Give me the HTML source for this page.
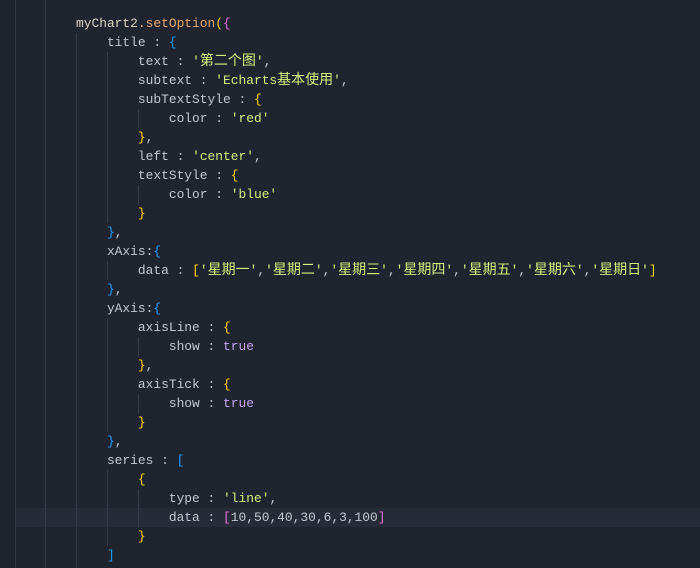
<!DOCTYPE html>
<html><head><meta charset="utf-8"><style>
html,body{margin:0;padding:0;}
body{width:700px;height:568px;background:#20242f;overflow:hidden;position:relative;font-family:"Liberation Mono","Noto Sans CJK SC",monospace;font-size:12.9px;color:#c3c7cf;}
.l{position:absolute;left:76px;height:19px;line-height:19px;white-space:pre;}
.g{position:absolute;width:1px;background:#353a46;}
.hl{position:absolute;left:15px;right:0;top:508px;height:19px;background:#272b37;}
.s{color:#d4ef7f}.y{color:#ffd700}.m{color:#da70d6}.b{color:#179fff}.t{color:#c5a3f5}.o{color:#e9a86f}.n{color:#dcd3c2}.p{color:#b8bcc4}
.c{font-size:14px;line-height:19px}
</style></head><body>
<div class="hl"></div>
<div class="g" style="left:15px;top:0;height:568px"></div>
<div class="g" style="left:45px;top:0;height:568px"></div>
<div class="g" style="left:76px;top:33px;height:535px"></div>
<div class="g" style="left:107px;top:52px;height:171px"></div>
<div class="g" style="left:107px;top:261px;height:19px"></div>
<div class="g" style="left:107px;top:318px;height:114px"></div>
<div class="g" style="left:107px;top:470px;height:76px"></div>
<div class="g" style="left:138px;top:109px;height:19px"></div>
<div class="g" style="left:138px;top:185px;height:19px"></div>
<div class="g" style="left:138px;top:337px;height:19px"></div>
<div class="g" style="left:138px;top:394px;height:19px"></div>
<div class="g" style="left:138px;top:489px;height:38px"></div>

<div class="l" style="top:13.5px"><span class="n">myChart2</span><span class="o">.setOption</span><span class="y">(</span><span class="m">{</span></div>
<div class="l" style="top:32.5px">    title <span class="p">:</span> <span class="b">{</span></div>
<div class="l" style="top:51.5px">        text <span class="p">:</span> <span class="s">'<span class="c">第二个图</span>'</span>,</div>
<div class="l" style="top:70.5px">        subtext <span class="p">:</span> <span class="s">'Echarts<span class="c">基本使用</span>'</span>,</div>
<div class="l" style="top:89.5px">        subTextStyle <span class="p">:</span> <span class="y">{</span></div>
<div class="l" style="top:108.5px">            color <span class="p">:</span> <span class="s">'red'</span></div>
<div class="l" style="top:127.5px">        <span class="y">}</span>,</div>
<div class="l" style="top:146.5px">        left <span class="p">:</span> <span class="s">'center'</span>,</div>
<div class="l" style="top:165.5px">        textStyle <span class="p">:</span> <span class="y">{</span></div>
<div class="l" style="top:184.5px">            color <span class="p">:</span> <span class="s">'blue'</span></div>
<div class="l" style="top:203.5px">        <span class="y">}</span></div>
<div class="l" style="top:222.5px">    <span class="b">}</span>,</div>
<div class="l" style="top:241.5px">    xAxis:<span class="b">{</span></div>
<div class="l" style="top:260.5px">        data <span class="p">:</span> <span class="y">[</span><span class="s">'<span class="c">星期一</span>'</span>,<span class="s">'<span class="c">星期二</span>'</span>,<span class="s">'<span class="c">星期三</span>'</span>,<span class="s">'<span class="c">星期四</span>'</span>,<span class="s">'<span class="c">星期五</span>'</span>,<span class="s">'<span class="c">星期六</span>'</span>,<span class="s">'<span class="c">星期日</span>'</span><span class="y">]</span></div>
<div class="l" style="top:279.5px">    <span class="b">}</span>,</div>
<div class="l" style="top:298.5px">    yAxis:<span class="b">{</span></div>
<div class="l" style="top:317.5px">        axisLine <span class="p">:</span> <span class="y">{</span></div>
<div class="l" style="top:336.5px">            show <span class="p">:</span> <span class="t">true</span></div>
<div class="l" style="top:355.5px">        <span class="y">}</span>,</div>
<div class="l" style="top:374.5px">        axisTick <span class="p">:</span> <span class="y">{</span></div>
<div class="l" style="top:393.5px">            show <span class="p">:</span> <span class="t">true</span></div>
<div class="l" style="top:412.5px">        <span class="y">}</span></div>
<div class="l" style="top:431.5px">    <span class="b">}</span>,</div>
<div class="l" style="top:450.5px">    series <span class="p">:</span> <span class="b">[</span></div>
<div class="l" style="top:469.5px">        <span class="y">{</span></div>
<div class="l" style="top:488.5px">            type <span class="p">:</span> <span class="s">'line'</span>,</div>
<div class="l" style="top:507.5px">            data <span class="p">:</span> <span class="m">[</span>10,50,40,30,6,3,100<span class="m">]</span></div>
<div class="l" style="top:526.5px">        <span class="y">}</span></div>
<div class="l" style="top:545.5px">    <span class="b">]</span></div>
</body></html>
